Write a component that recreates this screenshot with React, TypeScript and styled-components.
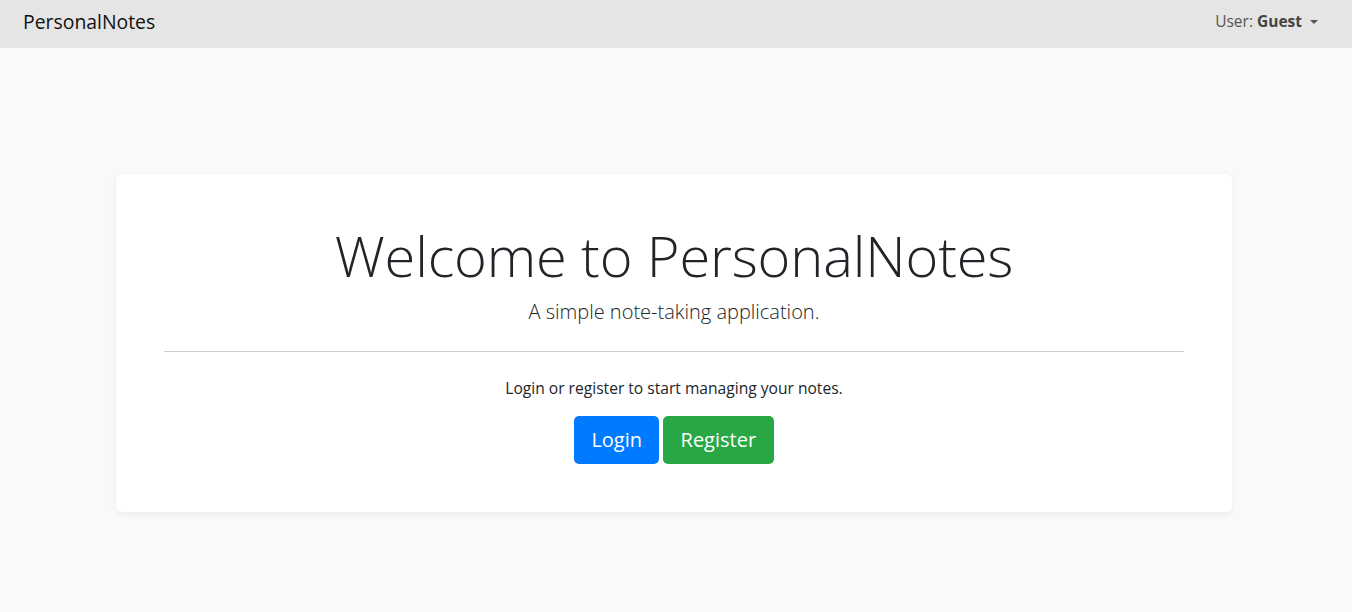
import React from "react";
import styled, { createGlobalStyle } from "styled-components";

const Global = createGlobalStyle`
  html, body { margin: 0; padding: 0; }
  body {
    background: #f8f9fa;
    font-family: "Open Sans", "Noto Sans", sans-serif;
    color: #212529;
    font-size: 16px;
    line-height: 1.5;
  }
  * { box-sizing: border-box; }
`;

const Page = styled.div`
  min-height: 612px;
  display: flex;
  flex-direction: column;
`;

const NavBar = styled.nav`
  height: 48px;
  background: #e5e5e5;
  display: flex;
  align-items: center;
  justify-content: space-between;
  padding: 0 34px 5px 23px;
`;

const Brand = styled.a`
  font-size: 19.4px;
  color: #111;
  text-decoration: none;
`;

const UserMenu = styled.div`
  display: flex;
  align-items: center;
  gap: 8px;
  font-size: 15.5px;
  color: #555;
  b { font-weight: 700; color: #444; }
`;

const Caret = styled.span`
  width: 0;
  height: 0;
  border-left: 4px solid transparent;
  border-right: 4px solid transparent;
  border-top: 4px solid #555;
  margin-top: 1px;
`;

const Card = styled.section`
  margin: 126px 120px 0 116px;
  background: #fff;
  border-radius: 6px;
  box-shadow: 0 2px 6px rgba(0, 0, 0, 0.06);
  padding: 48px;
  text-align: center;
`;

const Title = styled.h1`
  margin: 0 0 8px;
  font-size: 56px;
  font-weight: 300;
  line-height: 1.2;
  letter-spacing: -0.15px;
`;

const Lead = styled.p`
  margin: 0;
  font-size: 20px;
  font-weight: 300;
  line-height: 30px;
`;

const Rule = styled.hr`
  margin: 24px 0;
  border: 0;
  border-top: 1px solid #cfcfcf;
`;

const Text = styled.p`
  margin: 0 0 16px;
  font-size: 15.6px;
  line-height: 24px;
`;

const Actions = styled.div`
  display: flex;
  justify-content: center;
  gap: 4px;
`;

const Button = styled.button<{ $variant: "primary" | "success" }>`
  height: 48px;
  padding: 0 ${(p) => (p.$variant === "primary" ? 17 : 17.5)}px;
  border: 0;
  border-radius: 5px;
  font-family: inherit;
  font-size: 20px;
  line-height: 46px;
  color: #fff;
  background: ${(p) => (p.$variant === "primary" ? "#007bff" : "#28a745")};
  cursor: pointer;
`;

export default function App() {
  return (
    <Page>
      <Global />
      <NavBar>
        <Brand href="#">PersonalNotes</Brand>
        <UserMenu>
          <span>
            User: <b>Guest</b>
          </span>
          <Caret />
        </UserMenu>
      </NavBar>
      <Card>
        <Title>Welcome to PersonalNotes</Title>
        <Lead>A simple note-taking application.</Lead>
        <Rule />
        <Text>Login or register to start managing your notes.</Text>
        <Actions>
          <Button $variant="primary">Login</Button>
          <Button $variant="success">Register</Button>
        </Actions>
      </Card>
    </Page>
  );
}
